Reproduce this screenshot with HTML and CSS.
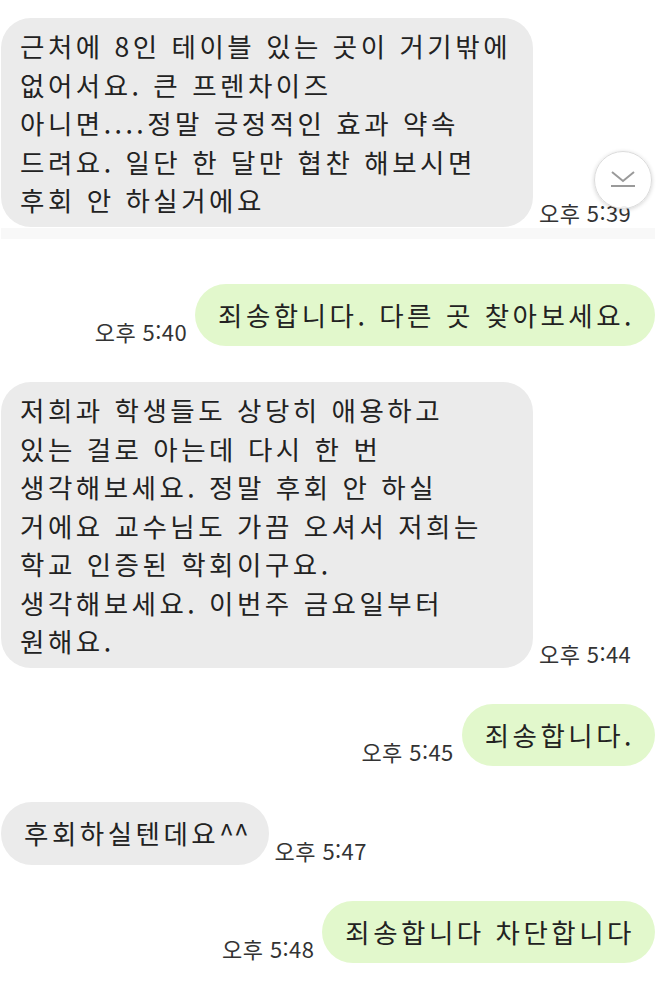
FILE: index.html
```html
<!DOCTYPE html>
<html lang="ko">
<head>
    <meta charset="UTF-8">
    <meta name="viewport" content="width=device-width, initial-scale=1.0">
    <title>대화</title>
    <link rel="stylesheet" href="styles.css">
</head>
<body>
    <div class="chat">
        <div class="row incoming top-row">
            <div class="bubble received long">근처에 8인 테이블 있는 곳이 거기밖에<br>없어서요. 큰 프렌차이즈<br>아니면....정말 긍정적인 효과 약속<br>드려요. 일단 한 달만 협찬 해보시면<br>후회 안 하실거에요</div>
            <span class="time">오후 5:39</span>
            <button class="scroll-down" aria-label="맨 아래로">
                <svg width="26" height="22" viewBox="0 0 26 22">
                    <path d="M2 3 L13 12 L24 3" fill="none" stroke="#9a9a9a" stroke-width="2"/>
                    <path d="M1 17 H25" stroke="#9a9a9a" stroke-width="2"/>
                </svg>
            </button>
        </div>

        <div class="seam"></div>

        <div class="row outgoing">
            <span class="time">오후 5:40</span>
            <div class="bubble sent">죄송합니다. 다른 곳 찾아보세요.</div>
        </div>

        <div class="row incoming">
            <div class="bubble received long">저희과 학생들도 상당히 애용하고<br>있는 걸로 아는데 다시 한 번<br>생각해보세요. 정말 후회 안 하실<br>거에요 교수님도 가끔 오셔서 저희는<br>학교 인증된 학회이구요.<br>생각해보세요. 이번주 금요일부터<br>원해요.</div>
            <span class="time">오후 5:44</span>
        </div>

        <div class="row outgoing">
            <span class="time">오후 5:45</span>
            <div class="bubble sent">죄송합니다.</div>
        </div>

        <div class="row incoming">
            <div class="bubble received">후회하실텐데요<span class="carets">^^</span></div>
            <span class="time">오후 5:47</span>
        </div>

        <div class="row outgoing">
            <span class="time">오후 5:48</span>
            <div class="bubble sent">죄송합니다 차단합니다</div>
        </div>
    </div>
</body>
</html>
```

FILE: styles.css
```css
body {
    margin: 0;
    background-color: #ffffff;
    font-family: "Noto Sans CJK KR", "Noto Sans", sans-serif;
    color: #222222;
}
.chat {
    display: flex;
    flex-direction: column;
    padding: 18px 3px 0 1px;
}
.row {
    position: relative;
    display: flex;
    align-items: flex-end;
    gap: 6px;
    margin-top: 36px;
}
.top-row {
    margin-top: 0;
}
.incoming {
    justify-content: flex-start;
}
.outgoing {
    justify-content: flex-end;
    gap: 8px;
}
.bubble {
    font-size: 26.5px;
    line-height: 38.5px;
    letter-spacing: 3.5px;
    padding: 12px 20px 12px 23px;
    border-radius: 31px;
    white-space: nowrap;
}
.bubble.long {
    box-sizing: border-box;
    width: 532px;
    padding: 9px 18px 7px 19px;
    border-radius: 30px;
}
.carets {
    letter-spacing: 0;
}
.received {
    background-color: #ebebeb;
}
.sent {
    background-color: #e2f8cc;
}
.time {
    font-size: 22px;
    line-height: 24px;
    letter-spacing: 0.4px;
    color: #333333;
    margin-bottom: 3px;
    white-space: nowrap;
}
.seam {
    height: 11px;
    margin-top: 1px;
    background-color: #f8f8f8;
}
.seam + .row {
    margin-top: 45px;
}
.scroll-down {
    position: absolute;
    left: 593px;
    top: 133px;
    width: 58px;
    height: 58px;
    border-radius: 50%;
    border: 1px solid #dcdcdc;
    background-color: rgba(255, 255, 255, 0.92);
    box-shadow: 0 1px 4px rgba(0, 0, 0, 0.18);
    display: flex;
    align-items: center;
    justify-content: center;
    padding: 0;
}
```
